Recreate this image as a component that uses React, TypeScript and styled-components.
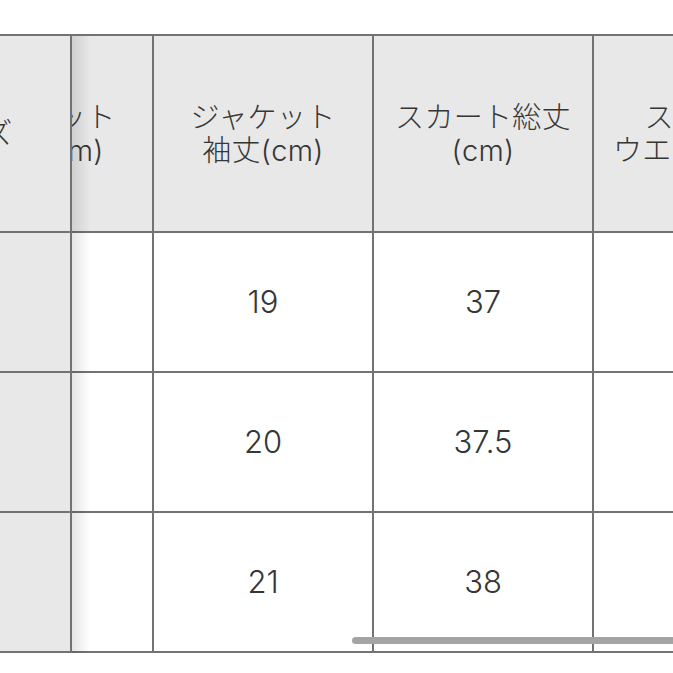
import React, { useLayoutEffect, useRef } from "react";
import styled, { createGlobalStyle } from "styled-components";

const GlobalStyle = createGlobalStyle`
  html, body {
    margin: 0;
    padding: 0;
    background: #ffffff;
  }
  body {
    font-family: Inter, "Liberation Sans", "Noto Sans CJK JP", sans-serif;
    color: #363636;
    overflow: hidden;
  }
`;

const LINE = "#727272";

const Page = styled.div`
  padding-top: 34px;
  width: 673px;
`;

const Frame = styled.div`
  position: relative;
  overflow: hidden;
`;

const Scroller = styled.div`
  margin-left: -132px;
  overflow-x: auto;
  scrollbar-width: none;
  &::-webkit-scrollbar {
    display: none;
  }
`;

const Table = styled.table`
  border-collapse: separate;
  border-spacing: 0;
  table-layout: fixed;
  width: 1084px;
`;

const shadow = `
  position: sticky;
  left: 0;
  z-index: 2;
  &::after {
    content: "";
    position: absolute;
    top: 0;
    bottom: -2px;
    left: 100%;
    margin-left: 2px;
    width: 18px;
    background: linear-gradient(to right, rgba(0,0,0,0.10), rgba(0,0,0,0));
    pointer-events: none;
  }
`;

const HeadCell = styled.th<{ $sticky?: boolean }>`
  box-sizing: border-box;
  height: 199px;
  padding: 0 4px;
  background: #e8e8e8;
  border-top: 2px solid ${LINE};
  border-right: 2px solid ${LINE};
  border-bottom: 2px solid ${LINE};
  font-weight: 300;
  font-size: 29px;
  line-height: 33px;
  letter-spacing: 0.3px;
  color: #363636;
  text-align: center;
  vertical-align: middle;
  white-space: nowrap;
  ${(p) => (p.$sticky ? shadow : "")}
`;

const Cell = styled.td<{ $sticky?: boolean }>`
  box-sizing: border-box;
  height: 140px;
  padding: 0 4px;
  background: ${(p) => (p.$sticky ? "#e8e8e8" : "#ffffff")};
  border-right: 2px solid ${LINE};
  border-bottom: 2px solid ${LINE};
  font-weight: 300;
  font-size: 31px;
  line-height: 36px;
  color: #363636;
  text-align: center;
  vertical-align: middle;
  white-space: nowrap;
  ${(p) => (p.$sticky ? shadow : "")}
`;

const ScrollIndicator = styled.div`
  position: absolute;
  left: 352px;
  right: -8px;
  bottom: 9px;
  height: 7px;
  border-radius: 4px;
  background: #a4a4a4;
  z-index: 3;
`;

const headers: React.ReactNode[] = [
  <>サイズ</>,
  <>
    ジャケット
    <br />
    着丈(cm)
  </>,
  <>
    ジャケット
    <br />
    袖丈(cm)
  </>,
  <>
    スカート総丈
    <br />
    (cm)
  </>,
  <>
    スカート
    <br />
    ウエスト(cm)
  </>,
];

const rows = [
  ["S", "44", "19", "37", "60"],
  ["M", "46", "20", "37.5", "64"],
  ["L", "48", "21", "38", "68"],
];

const widths = [204, 220, 220, 220, 220];

export default function App() {
  const ref = useRef<HTMLDivElement>(null);
  useLayoutEffect(() => {
    if (ref.current) ref.current.scrollLeft = 138;
  }, []);
  return (
    <>
      <GlobalStyle />
      <Page>
        <Frame>
          <Scroller ref={ref}>
            <Table>
              <colgroup>
                {widths.map((w, i) => (
                  <col key={i} style={{ width: w }} />
                ))}
              </colgroup>
              <thead>
                <tr>
                  {headers.map((h, i) => (
                    <HeadCell key={i} $sticky={i === 0}>
                      {h}
                    </HeadCell>
                  ))}
                </tr>
              </thead>
              <tbody>
                {rows.map((r, ri) => (
                  <tr key={ri}>
                    {r.map((v, ci) => (
                      <Cell key={ci} $sticky={ci === 0}>
                        {v}
                      </Cell>
                    ))}
                  </tr>
                ))}
              </tbody>
            </Table>
          </Scroller>
          <ScrollIndicator />
        </Frame>
      </Page>
    </>
  );
}
